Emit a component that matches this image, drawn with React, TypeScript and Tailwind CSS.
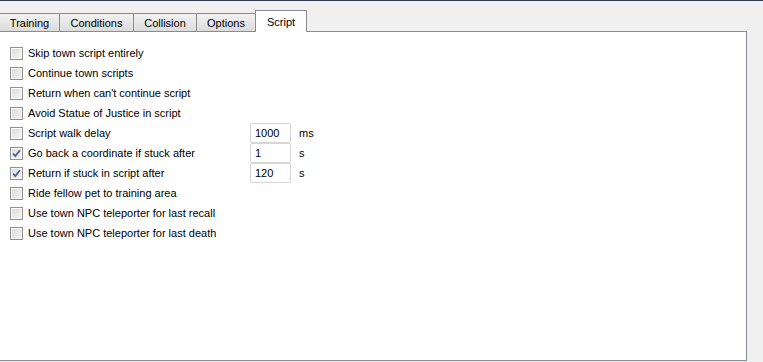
import React from 'react';

type Row = {
    label: string
    checked: boolean
    value?: string
    unit?: string
}

const rows: Row[] = [
    { label: 'Skip town script entirely', checked: false },
    { label: 'Continue town scripts', checked: false },
    { label: "Return when can't continue script", checked: false },
    { label: 'Avoid Statue of Justice in script', checked: false },
    { label: 'Script walk delay', checked: false, value: '1000', unit: 'ms' },
    { label: 'Go back a coordinate if stuck after', checked: true, value: '1', unit: 's' },
    { label: 'Return if stuck in script after', checked: true, value: '120', unit: 's' },
    { label: 'Ride fellow pet to training area', checked: false },
    { label: 'Use town NPC teleporter for last recall', checked: false },
    { label: 'Use town NPC teleporter for last death', checked: false },
]

const tabs = ['Training', 'Conditions', 'Collision', 'Options', 'Script']
const tabWidths = ['w-[59px]', 'w-[74px]', 'w-[63px]', 'w-[59px]', 'w-[52px]']

const CheckBox = ({ checked }: { checked: boolean }) => (
    <div className="w-[13px] h-[13px] border border-[#8e8f8f] bg-white p-[1px] shrink-0">
        <div className="w-full h-full bg-gradient-to-br from-[#dcdcdc] to-[#f4f4f4] flex items-center justify-center">
            {checked && (
                <svg width="9" height="9" viewBox="0 0 9 9">
                    <path d="M1 4.5 L3.3 7 L8 1.2" fill="none" stroke="#4a5f97" strokeWidth="1.8" />
                </svg>
            )}
        </div>
    </div>
)

export default function App() {
    return (
        <div className="w-[763px] h-[362px] bg-[#f0f0f0] flex flex-col overflow-hidden text-[11px] text-black"
            style={{ fontFamily: '"Liberation Sans", Arial, sans-serif' }}>
            <div className="h-[1px] bg-[#2c3d52] shrink-0" />
            {/* tab strip */}
            <div className="h-[30px] flex items-end shrink-0 relative z-10">
                {tabs.map((t, i) => {
                    const active = t === 'Script'
                    return active ? (
                        <div key={t} className={`${tabWidths[i]} h-[22px] -mb-[1px] bg-white border border-b-0 border-[#898c95] flex items-start justify-center pt-[3px]`}>
                            {t}
                        </div>
                    ) : (
                        <div key={t} className={`${tabWidths[i]} h-[18px] bg-gradient-to-b from-[#f2f2f2] to-[#dbdbdb] border border-b-0 border-r-0 border-[#898c95] flex items-center justify-center pt-[1px] first:border-l-0`}>
                            {t}
                        </div>
                    )
                })}
            </div>
            {/* panel */}
            <div className="h-[330px] w-[747px] bg-white border border-l-0 border-[#898c95] pt-[11px] pl-[10px] shrink-0">
                <div className="flex flex-col">
                    {rows.map((r) => (
                        <div key={r.label} className="h-[20px] flex items-center">
                            <div className="w-[240px] flex items-center gap-[5px]">
                                <CheckBox checked={r.checked} />
                                <span>{r.label}</span>
                            </div>
                            {r.value && (
                                <>
                                    <div className="w-[41px] h-[20px] border border-[#d6d6d6] rounded-[2px] bg-white flex items-center pl-[4px]">
                                        {r.value}
                                    </div>
                                    <span className="ml-[8px]">{r.unit}</span>
                                </>
                            )}
                        </div>
                    ))}
                </div>
            </div>
        </div>
    )
}
